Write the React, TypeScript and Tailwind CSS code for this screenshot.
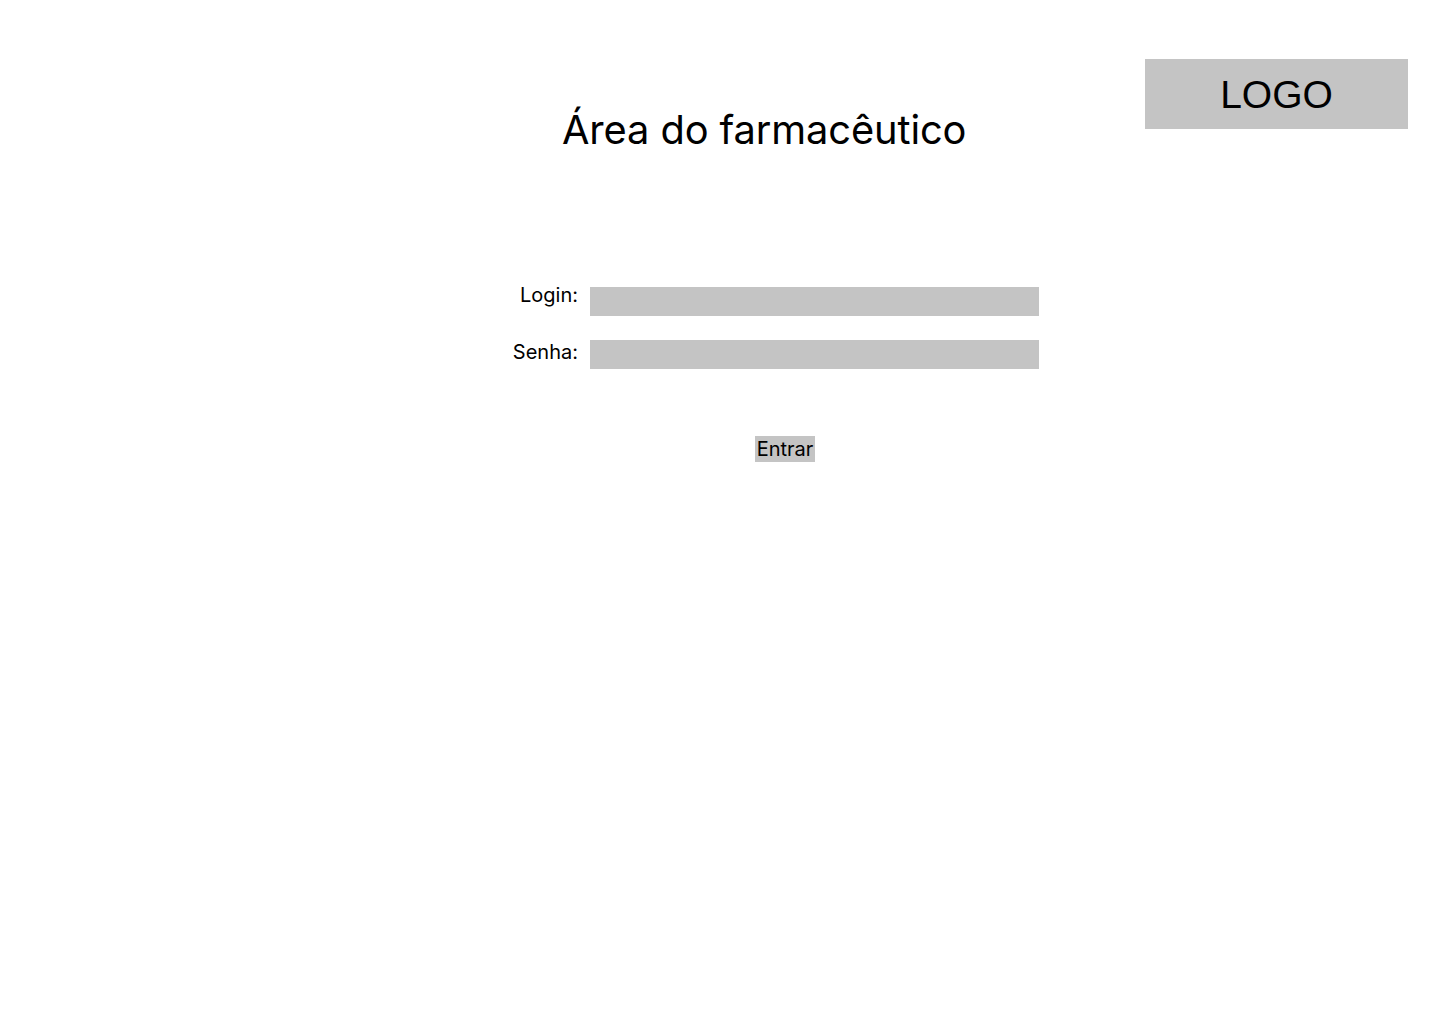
import React from "react";

export default function App() {
  return (
    <div className="min-h-[1024px] w-[1440px] bg-white text-black" style={{ fontFamily: "Inter, 'Noto Sans', sans-serif" }}>
      <div className="flex items-start justify-between pt-[59px] pr-[32px]">
        <h1 className="ml-[562px] mt-[47px] text-[39.8px] leading-[48px] font-normal tracking-[-0.1px]">Área do farmacêutico</h1>
        <div
          className="flex h-[70px] w-[263px] items-center justify-center bg-[#c4c4c4] text-[39px] leading-none"
          style={{ fontFamily: "'Liberation Sans', Arial, sans-serif" }}
        >
          <span className="mt-[1px]">LOGO</span>
        </div>
      </div>

      <form className="ml-[490px] mt-[133px] flex flex-col" onSubmit={(e) => e.preventDefault()}>
        <div className="flex items-start gap-[12px]">
          <label className="-mt-[4px] w-[88px] text-right text-[20px] leading-[24px]">Login:</label>
          <input className="h-[29px] w-[449px] bg-[#c4c4c4] outline-none" type="text" />
        </div>
        <div className="mt-[24px] flex items-start gap-[12px]">
          <label className="mt-0 w-[88px] text-right text-[20px] leading-[24px]">Senha:</label>
          <input className="h-[29px] w-[449px] bg-[#c4c4c4] outline-none" type="password" />
        </div>
        <div className="mt-[67px] flex">
          <button
            type="submit"
            className="ml-[265px] flex h-[26px] w-[60px] items-center justify-center bg-[#c4c4c4] text-[20px] leading-[26px]"
          >
            Entrar
          </button>
        </div>
      </form>
    </div>
  );
}
